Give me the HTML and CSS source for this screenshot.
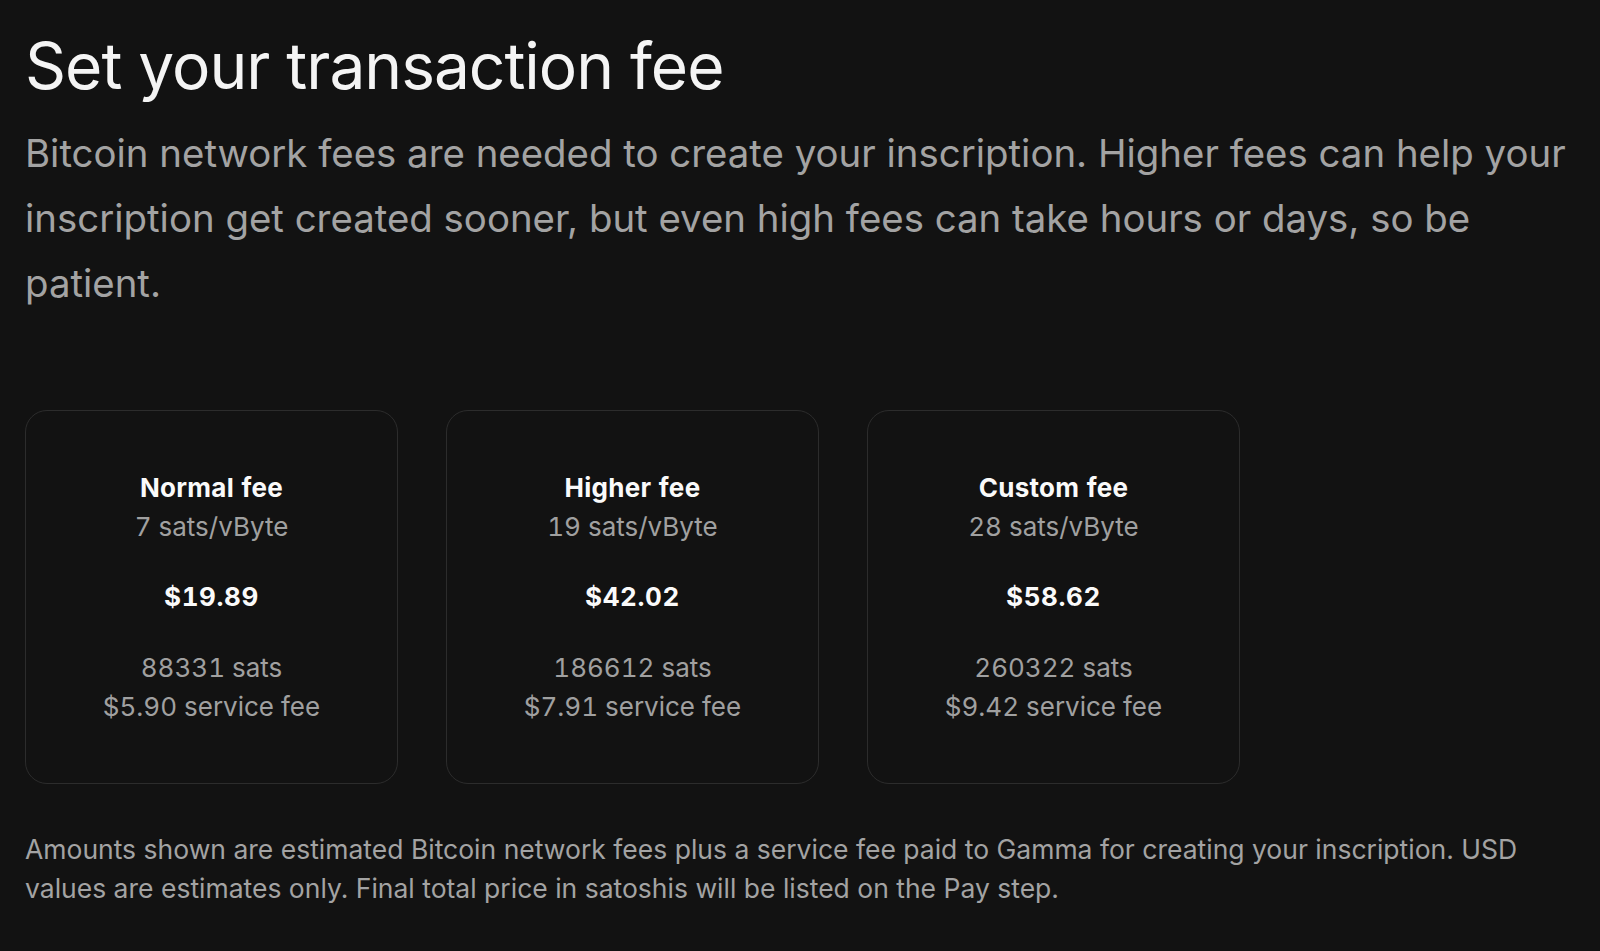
FILE: index.html
```html
<!DOCTYPE html>
<html lang="en">
<head>
    <meta charset="UTF-8">
    <meta name="viewport" content="width=device-width, initial-scale=1.0">
    <title>Set your transaction fee</title>
    <link rel="stylesheet" href="styles.css">
</head>
<body>
    <main class="page">
        <h1 class="title">Set your transaction fee</h1>
        <p class="intro">Bitcoin network fees are needed to create your inscription. Higher fees can help your inscription get created sooner, but even high fees can take hours or days, so be patient.</p>

        <div class="fees">
            <div class="fee-card">
                <div class="fee-head">
                    <div class="fee-name">Normal fee</div>
                    <div class="fee-rate">7 sats/vByte</div>
                </div>
                <div class="fee-price">$19.89</div>
                <div class="fee-detail">
                    <div>88331 sats</div>
                    <div>$5.90 service fee</div>
                </div>
            </div>

            <div class="fee-card">
                <div class="fee-head">
                    <div class="fee-name">Higher fee</div>
                    <div class="fee-rate">19 sats/vByte</div>
                </div>
                <div class="fee-price">$42.02</div>
                <div class="fee-detail">
                    <div>186612 sats</div>
                    <div>$7.91 service fee</div>
                </div>
            </div>

            <div class="fee-card">
                <div class="fee-head">
                    <div class="fee-name">Custom fee</div>
                    <div class="fee-rate">28 sats/vByte</div>
                </div>
                <div class="fee-price">$58.62</div>
                <div class="fee-detail">
                    <div>260322 sats</div>
                    <div>$9.42 service fee</div>
                </div>
            </div>
        </div>

        <p class="note">Amounts shown are estimated Bitcoin network fees plus a service fee paid to Gamma for creating your inscription. USD values are estimates only. Final total price in satoshis will be listed on the Pay step.</p>
    </main>
</body>
</html>
```

FILE: styles.css
```css
html, body { margin: 0; background: #121212; }
body { font-family: Inter, "Noto Sans", sans-serif; color: #f2f2f2; }

.page { padding: 27px 25px 0 25px; }

.title { font-size: 64px; font-weight: 400; line-height: normal; margin: 0; color: #f4f4f4; letter-spacing: -1px; }

.intro { font-size: 38.4px; line-height: 65px; margin: 17px 0 0 0; color: #a3a3a3; }

.fees { display: flex; gap: 48px; margin-top: 94px; }

.fee-card {
    width: 373px; height: 374px; box-sizing: border-box;
    border: 1.5px solid #2c2c2c; border-radius: 22px;
    display: flex; flex-direction: column; align-items: center; justify-content: center;
    gap: 31px; text-align: center;
    font-size: 26px; line-height: 39px;
    font-variant-numeric: tabular-nums;
}
.fee-detail { margin-top: 1px; color: #a0a0a0; }
.fee-name { font-weight: 700; color: #fafafa; letter-spacing: 0.3px; }
.fee-rate { color: #a0a0a0; }
.fee-price { font-weight: 700; color: #fafafa; letter-spacing: 0.6px; }

.note { font-size: 26.5px; line-height: 39px; margin: 46px 0 0 0; color: #a3a3a3; }
```
